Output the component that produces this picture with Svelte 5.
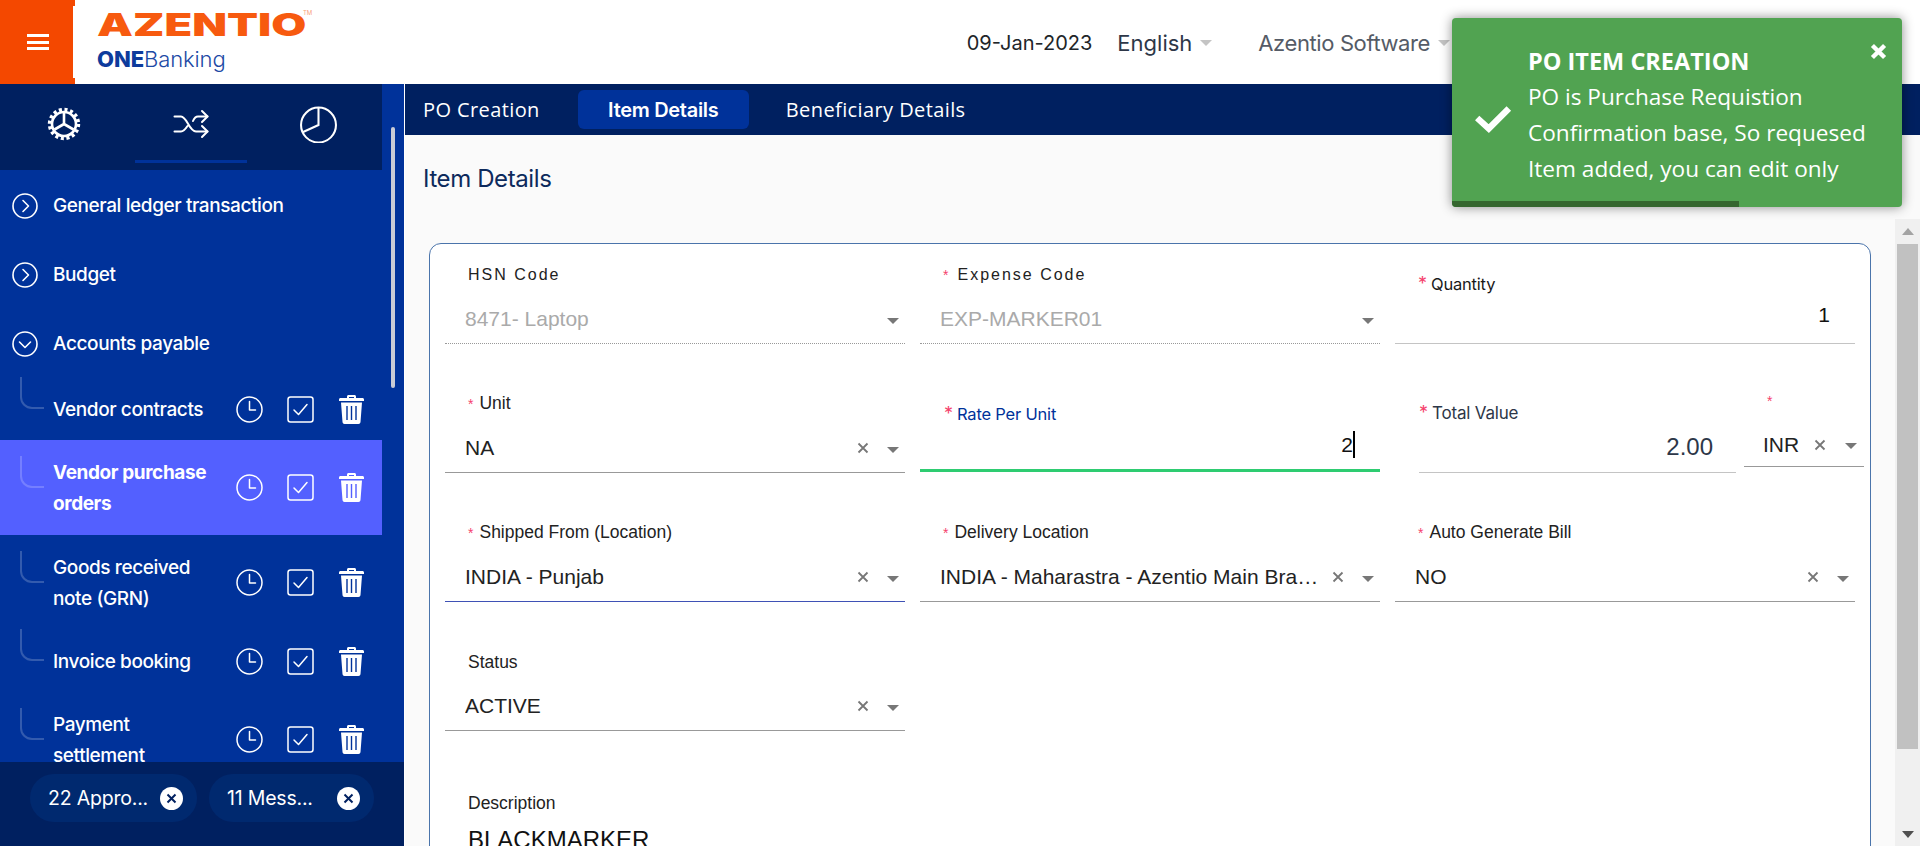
<script>
  const groups = [
    { name: 'General ledger transaction', open: false },
    { name: 'Budget', open: false },
    { name: 'Accounts payable', open: true },
  ];
  const subItems = [
    { name: 'Vendor contracts', tall: false },
    { name: 'Vendor purchase orders', tall: true, active: true },
    { name: 'Goods received note (GRN)', tall: true },
    { name: 'Invoice booking', tall: false },
    { name: 'Payment settlement', tall: true },
  ];
  const chips = ['22 Appro...', '11 Mess...'];
  const tabs = ['PO Creation', 'Item Details', 'Beneficiary Details'];
</script>

{#snippet req()}<span class="star">*</span>{/snippet}

{#snippet clearIcon()}
  <svg class="clear" viewBox="0 0 12 12"><path d="M1.5 1.5l9 9M10.5 1.5l-9 9" /></svg>
{/snippet}

{#snippet selectField(label, value, required = true)}
  <div class="field">
    <div class="label">{#if required}{@render req()}{/if}{label}</div>
    <div class="control">
      <span class="value">{value}</span>
      {@render clearIcon()}
      <i class="arrow"></i>
    </div>
  </div>
{/snippet}

{#snippet disabledField(label, value, required = false)}
  <div class="field">
    <div class="label spaced">{#if required}{@render req()}{/if}{label}</div>
    <div class="control disabled">
      <span class="value">{value}</span>
      <i class="arrow"></i>
    </div>
  </div>
{/snippet}

<div class="page">
  <header>
    <button class="burger" aria-label="menu"><span></span><span></span><span></span></button>
    <div class="logo">
      <div class="azentio"><span>AZENTIO</span><sup>TM</sup></div>
      <div class="onebanking"><b>ONE</b>Banking</div>
    </div>
    <div class="top-right">
      <span class="date">09-Jan-2023</span>
      <span class="lang">English</span><i class="arrow light"></i>
      <span class="org">Azentio Software</span><i class="arrow light"></i>
    </div>
  </header>

  <div class="body">
    <aside>
      <div class="side-tabs">
        <svg class="gear" viewBox="0 0 36 36" fill="none" stroke="#fff">
          <circle cx="18" cy="18" r="14.2" stroke-width="4" stroke-dasharray="3 2.58" />
          <circle cx="18" cy="18" r="12" stroke-width="2.6" />
          <path d="M18 18V7M18 18L8.5 23.5M18 18l9.5 5.5" stroke-width="2.6" />
        </svg>
        <div class="shuffle-tab">
          <svg viewBox="0 0 36 36" fill="none" stroke="#fff" stroke-width="2" stroke-linecap="round" stroke-linejoin="round">
            <path d="M1.5 10.5H8c6 0 8 15 15 15h11.5M1.5 25.500H8c2.500 0 4.500-2.500 6.500-5.500M20 15c1-2.500 2.500-4.500 5-4.500h9.500" />
            <path d="M29 5l5.500 5.500L29 16M29 20l5.500 5.500L29 31" />
          </svg>
        </div>
        <svg class="pie" viewBox="0 0 36 36" fill="none" stroke="#fff" stroke-width="2">
          <circle cx="18" cy="18.500" r="17" />
          <path d="M18 1.500v17L2.500 25.500" />
        </svg>
      </div>

      <div class="menu">
        {#each groups as g}
          <div class="group">
            <svg class="chev" viewBox="0 0 26 26" fill="none" stroke="#fff" stroke-width="1.600" stroke-linecap="round" stroke-linejoin="round">
              <circle cx="13" cy="13" r="12" />
              {#if g.open}<path d="M7.500 11l5.500 5.500 5.500-5.500" />{:else}<path d="M11 7.500l5.500 5.500-5.500 5.500" />{/if}
            </svg>
            <span>{g.name}</span>
          </div>
        {/each}
        {#each subItems as item}
          <div class="sub" class:tall={item.tall} class:active={item.active}>
            <i class="curve"></i>
            <span class="sub-name">{item.name}</span>
            <div class="actions">
              <svg viewBox="0 0 27 27" fill="none" stroke="#fff" stroke-width="1.500" stroke-linecap="round" stroke-linejoin="round">
                <circle cx="13.500" cy="13.500" r="12.500" />
                <path d="M13.500 5.500v8.500h6" />
              </svg>
              <svg viewBox="0 0 27 27" fill="none" stroke="#fff" stroke-width="1.500" stroke-linecap="round" stroke-linejoin="round">
                <rect x="1" y="1" width="25" height="25" rx="2.500" />
                <path d="M7 14l4.500 4.500L20 8.500" />
              </svg>
              <svg class="trash" viewBox="0 0 25 29">
                <path fill="#fff" d="M8 3V1.500C8 .7 8.700 0 9.500 0h6c.8 0 1.500.7 1.500 1.500V3h6.500c.8 0 1.500.7 1.500 1.500V6H0V4.500C0 3.700.7 3 1.500 3zM10 3h5V2h-5zM2 7.500h21L21.500 27c-.1 1.100-1 2-2 2h-14c-1 0-1.900-.9-2-2z" />
                <path stroke="#00329a" stroke-width="1.400" d="M8 11v14M12.500 11v14M17 11v14" class="trash-lines" />
              </svg>
            </div>
          </div>
        {/each}
      </div>

      <div class="side-foot">
        {#each chips as chip}
          <div class="chip">
            <span>{chip}</span>
            <svg viewBox="0 0 23 23"><circle cx="11.500" cy="11.500" r="11.500" fill="#fff" /><path d="M7.500 7.500l8 8M15.500 7.500l-8 8" stroke="#002060" stroke-width="2" /></svg>
          </div>
        {/each}
      </div>
      <div class="side-thumb"></div>
    </aside>

    <main>
      <nav>
        {#each tabs as tab, i}
          <button class="tab" class:current={i === 1}>{tab}</button>
        {/each}
      </nav>
      <h2>Item Details</h2>
      <div class="scroller">
        <div class="panel">
          <div class="card">
            <div class="form">
              {@render disabledField('HSN Code', '8471- Laptop')}
              {@render disabledField('Expense Code', 'EXP-MARKER01', true)}
              <div class="field number">
                <div class="label inter">{@render req()}Quantity</div>
                <div class="control"><span class="value">1</span></div>
              </div>

              {@render selectField('Unit', 'NA')}
              <div class="field number rate">
                <div class="label inter">{@render req()}Rate Per Unit</div>
                <div class="control"><span class="value">2</span><i class="caret"></i></div>
              </div>
              <div class="total-wrap">
                <div class="field number total">
                  <div class="label inter">{@render req()}Total Value</div>
                  <div class="control"><span class="value">2.00</span></div>
                </div>
                <div class="field currency">
                  <div class="label">{@render req()}</div>
                  <div class="control">
                    <span class="value">INR</span>
                    {@render clearIcon()}
                    <i class="arrow"></i>
                  </div>
                </div>
              </div>

              <div class="shipped">{@render selectField('Shipped From (Location)', 'INDIA - Punjab')}</div>
              {@render selectField('Delivery Location', 'INDIA - Maharastra - Azentio Main Branch')}
              {@render selectField('Auto Generate Bill', 'NO')}

              {@render selectField('Status', 'ACTIVE', false)}
              <div></div>
              <div></div>

              <div class="description">
                <div class="label">Description</div>
                <div class="desc-value">BLACKMARKER</div>
              </div>
            </div>
          </div>
        </div>
        <div class="scrollbar">
          <i class="up"></i>
          <div class="thumb"></div>
          <i class="down"></i>
        </div>
      </div>
    </main>
  </div>

  <div class="toast">
    <svg class="tick" viewBox="0 0 36 27"><path d="M3 13l11 10L33 4" fill="none" stroke="#fff" stroke-width="6" /></svg>
    <div class="toast-text">
      <div class="toast-title">PO ITEM CREATION</div>
      <div>PO is Purchase Requistion</div>
      <div>Confirmation base, So requesed</div>
      <div>Item added, you can edit only</div>
    </div>
    <svg class="toast-close" viewBox="0 0 14 14"><path d="M2 2l10 10M12 2L2 12" stroke="#fff" stroke-width="3.600" /></svg>
    <div class="progress"></div>
  </div>
</div>

<style>
  :global(body) {
    margin: 0;
    font-family: Inter, 'Liberation Sans', sans-serif;
    overflow: hidden;
  }
  .page {
    position: relative;
    width: 1920px;
    height: 846px;
    overflow: hidden;
    background: #fff;
  }
  header {
    display: flex;
    align-items: stretch;
    height: 84px;
  }
  .burger {
    position: relative;
    width: 75px;
    border: 0;
    padding: 0 26px 0 27px;
    background: #f44800;
    display: flex;
    flex-direction: column;
    justify-content: center;
    gap: 3.500px;
  }
  .burger::after {
    content: '';
    position: absolute;
    right: 0;
    top: 6px;
    bottom: 6px;
    width: 2px;
    background: #fff;
  }
  .burger span {
    display: block;
    height: 3px;
    background: #fff;
  }
  .logo {
    margin-left: 22px;
    padding-top: 7px;
  }
  .azentio {
    height: 37px;
    font-size: 31px;
    font-weight: 900;
    line-height: 36px;
    color: #f75a0f;
    white-space: nowrap;
    position: relative;
  }
  .azentio span {
    display: inline-block;
    transform: scaleX(1.46);
    transform-origin: left center;
  }
  .azentio sup {
    position: absolute;
    left: 206px;
    top: 0;
    font-size: 6px;
    line-height: 12px;
    font-weight: 400;
    color: #f9a27a;
  }
  .onebanking {
    font-size: 22px;
    line-height: 30px;
    font-weight: 300;
    color: #1d4aa5;
    letter-spacing: -0.1px;
  }
  .onebanking b {
    font-weight: 800;
    color: #0d3b9c;
  }
  .top-right {
    margin-left: auto;
    display: flex;
    align-items: center;
    font-size: 22px;
    padding: 1px 470px 0 0;
    box-sizing: border-box;
  }
  .date { color: #212529; margin-right: 25px; font-size: 20px; }
  .lang { color: #2d3748; margin-right: 8px; }
  .org { color: #555b66; margin: 0 8px 0 46px; letter-spacing: -0.4px; }

  .arrow {
    display: block;
    flex: none;
    width: 0;
    height: 0;
    border-left: 6.500px solid transparent;
    border-right: 6.500px solid transparent;
    border-top: 6.500px solid #777;
  }
  .arrow.light {
    border-top-color: #c4c4c4;
  }

  .body {
    display: flex;
    height: 762px;
  }
  aside {
    position: relative;
    flex: none;
    width: 404px;
    display: flex;
    flex-direction: column;
    background: #00329a;
    border-right: 1px solid #fff;
  }
  .side-tabs {
    flex: none;
    width: 382px;
    height: 86px;
    background: #002060;
    display: flex;
    align-items: flex-start;
    padding-top: 22px;
    box-sizing: border-box;
  }
  .gear { width: 36px; height: 36px; margin-left: 46px; }
  .shuffle-tab {
    width: 112px;
    height: 54px;
    margin-left: 53px;
    border-bottom: 3px solid #00329a;
    display: flex;
    justify-content: center;
  }
  .shuffle-tab svg { width: 36px; height: 36px; }
  .pie { width: 37px; height: 37px; margin-left: 53px; }
  .menu {
    flex: 1;
    min-height: 0;
    overflow: hidden;
    width: 382px;
    padding-top: 1px;
    color: #fff;
    font-size: 19px;
    letter-spacing: -0.4px;
  }
  .group {
    height: 69px;
    display: flex;
    align-items: center;
    gap: 15px;
    padding-left: 12px;
    font-weight: 500;
  }
  .chev { width: 26px; height: 26px; flex: none; }
  .sub {
    height: 62px;
    display: flex;
    align-items: center;
    padding-left: 20px;
    line-height: 31px;
    font-weight: 500;
  }
  .sub.tall { height: 95px; }
  .sub.active { background: #5360ff; }
  .sub.active .sub-name { font-weight: 700; }
  .sub.active .trash-lines { stroke: #5360ff; }
  .curve {
    flex: none;
    width: 24px;
    height: 32px;
    margin-bottom: 32px;
    box-sizing: border-box;
    border-left: 2px solid rgba(255, 255, 255, 0.2);
    border-bottom: 2px solid rgba(255, 255, 255, 0.2);
    border-bottom-left-radius: 12px;
  }
  .sub-name {
    width: 168px;
    margin-left: 9px;
    flex: none;
  }
  .actions {
    display: flex;
    gap: 24px;
    margin-left: 15px;
    align-items: center;
  }
  .actions svg { width: 27px; height: 27px; display: block; }
  .actions .trash { width: 25px; height: 29px; margin-left: 1px; }
  .side-foot {
    flex: none;
    height: 84px;
    background: #002060;
    display: flex;
    gap: 12px;
    padding: 12px 0 0 30px;
    box-sizing: border-box;
  }
  .chip {
    width: 165px;
    height: 48px;
    border-radius: 24px;
    background: #00296f;
    color: #fff;
    font-size: 19.500px;
    letter-spacing: -0.2px;
    display: flex;
    align-items: center;
    justify-content: space-between;
    padding: 0 14px 0 18px;
    box-sizing: border-box;
  }
  .chip:first-child { width: 167px; }
  .chip svg { width: 23px; height: 23px; flex: none; }
  .side-thumb {
    position: absolute;
    left: 391px;
    top: 43px;
    width: 4px;
    height: 261px;
    border-radius: 2px;
    background: #c9ccd6;
  }

  main {
    flex: 1;
    min-width: 0;
    background: #fafafa;
    display: flex;
    flex-direction: column;
  }
  nav {
    flex: none;
    height: 51px;
    background: #002060;
    display: flex;
    align-items: center;
    padding-left: 18px;
    box-sizing: border-box;
  }
  .tab {
    border: 0;
    background: none;
    color: #fff;
    font-family: 'Open Sans', sans-serif;
    font-size: 20px;
    letter-spacing: 0.4px;
    padding: 0;
    height: 39px;
  }
  .tab:first-child { margin-right: 38px; }
  .tab.current {
    width: 171px;
    margin-right: 37px;
    border-radius: 6px;
    background: #00329a;
    font-family: Inter, sans-serif;
    font-size: 20px;
    font-weight: 600;
    letter-spacing: -0.3px;
  }
  h2 {
    flex: none;
    margin: 0;
    height: 84px;
    box-sizing: border-box;
    padding: 31px 0 0 18px;
    font-size: 24px;
    line-height: 26px;
    font-weight: 400;
    letter-spacing: -0.4px;
    color: #0d2a5c;
  }
  .scroller {
    flex: 1;
    min-height: 0;
    display: flex;
  }
  .panel {
    flex: 1;
    min-width: 0;
    padding: 24px 0 0 24px;
    overflow: hidden;
  }
  .card {
    width: 1442px;
    height: 700px;
    box-sizing: border-box;
    background: #fff;
    border: 1px solid #4a74ab;
    border-radius: 12px;
  }
  .form {
    display: grid;
    grid-template-columns: repeat(3, 460px);
    grid-auto-rows: 100px;
    column-gap: 15px;
    row-gap: 29px;
    padding-left: 15px;
  }
  .field {
    height: 100%;
    display: flex;
    flex-direction: column;
    justify-content: flex-end;
    min-width: 0;
  }
  .label {
    margin: 0 0 15px 23px;
    font: 17.500px/20px 'Liberation Sans', sans-serif;
    color: #222;
  }
  .label.spaced {
    font-size: 16px;
    letter-spacing: 2px;
  }
  .label.inter {
    font-family: Inter, sans-serif;
    font-size: 16.500px;
    letter-spacing: -0.2px;
    color: #1a1a1a;
  }
  .star {
    color: #f5426c;
    font-size: 14px;
    margin-right: 6px;
    letter-spacing: 0;
  }
  .inter .star { font-size: 18px; margin-right: 4px; }
  .spaced .star { margin-right: 9px; }
  .control {
    height: 44px;
    box-sizing: border-box;
    display: flex;
    align-items: center;
    padding: 0 6.500px 5px 20px;
    border-bottom: 1px solid #999;
    font: 21px 'Liberation Sans', sans-serif;
    color: #222;
  }
  .value {
    flex: 1;
    min-width: 0;
    white-space: nowrap;
    overflow: hidden;
    text-overflow: ellipsis;
  }
  .clear {
    flex: none;
    width: 12px;
    height: 12px;
    margin: 0 18px 0 11px;
    fill: none;
    stroke: #777;
    stroke-width: 1.800;
  }
  .control .arrow { margin-top: 3px; }
  .control.disabled {
    border-bottom: 1px dotted #999;
    color: #aaa;
  }
  .shipped .control { border-bottom-color: #3f51b5; }

  .number .label { margin-bottom: 4px; }
  .number .control {
    height: 46px;
    padding-right: 25px;
    padding-bottom: 11px;
    border-bottom-color: #c4c4c4;
    color: #111;
  }
  .number .value { text-align: right; }
  .rate .label { color: #00329a; margin-left: 24px; }
  .rate .control {
    height: 44px;
    margin-bottom: 1px;
    border-bottom: 3px solid #2ecc71;
    padding-bottom: 8px;
  }
  .caret {
    width: 2px;
    height: 27px;
    background: #000;
    flex: none;
  }
  .total-wrap {
    display: flex;
    gap: 8px;
    padding-left: 24px;
    margin-right: -9px;
  }
  .total { flex: 1; }
  .total .label {
    margin: 0 0 4px 0;
    font-size: 17px;
    color: #2d3748;
  }
  .total .control {
    height: 46px;
    padding-right: 23px;
    padding-bottom: 5px;
    font-size: 24px;
    color: #2d3748;
  }
  .currency {
    flex: none;
    width: 120px;
    padding-bottom: 6px;
    box-sizing: border-box;
  }
  .currency .label { margin: 0 0 19px 23px; line-height: 18px; }
  .currency .control {
    height: 38px;
    padding: 0 7px 6px 19px;
  }
  .currency .clear { margin: 0 19px 0 4px; }
  .description .label {
    margin: 33px 0 13px 23px;
  }
  .desc-value {
    margin-left: 23px;
    font: 24px/28px 'Liberation Sans', sans-serif;
    color: #111;
  }

  .scrollbar {
    flex: none;
    width: 25px;
    background: #f0f0f0;
    display: flex;
    flex-direction: column;
    align-items: center;
    padding-top: 9px;
    box-sizing: border-box;
  }
  .thumb {
    width: 21px;
    height: 505px;
    margin-top: 9px;
    background: #c1c1c1;
  }
  .up, .down {
    display: block;
    width: 0;
    height: 0;
    border-left: 6px solid transparent;
    border-right: 6px solid transparent;
  }
  .up { border-bottom: 7px solid #a3a3a3; }
  .down { border-top: 7px solid #505050; margin-top: 82px; }

  .toast {
    position: absolute;
    left: 1452px;
    top: 18px;
    width: 450px;
    height: 189px;
    box-sizing: border-box;
    overflow: hidden;
    border-radius: 4px;
    background: #51a351;
    color: #fff;
    display: flex;
    align-items: center;
    padding: 5px 0 0 22px;
    font: 22.600px/36px 'Open Sans', sans-serif;
    box-shadow: 0 0 12px rgba(0, 0, 0, 0.45);
  }
  .tick { width: 38px; height: 29px; flex: none; margin: 6px 16px 0 0; }
  .toast-title { font-weight: 700; font-size: 23.500px; }
  .toast-text { white-space: nowrap; }
  .toast-close {
    position: absolute;
    top: 25px;
    right: 15px;
    width: 17px;
    height: 17px;
  }
  .progress {
    position: absolute;
    left: 0;
    bottom: 0;
    width: 287px;
    height: 6px;
    background: #35662f;
  }
</style>
